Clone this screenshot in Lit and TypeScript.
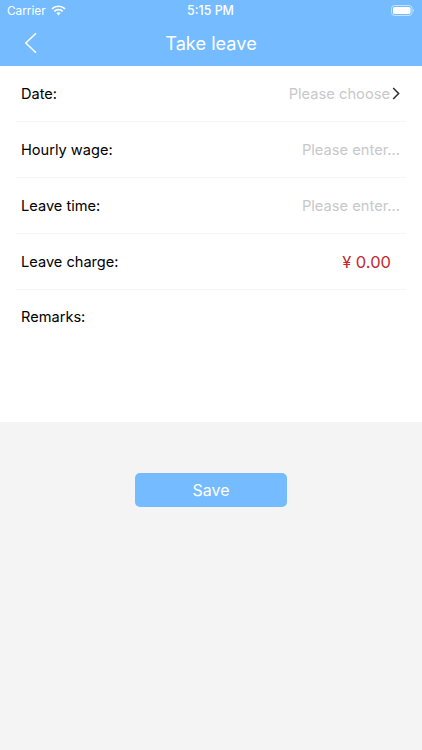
import { LitElement, html, css } from "lit";
import { customElement } from "lit/decorators.js";

@customElement("app-root")
export class AppRoot extends LitElement {
  static styles = css`
    :host {
      display: flex;
      flex-direction: column;
      width: 422px;
      height: 750px;
      background: #f4f4f4;
      font-family: Inter, "Liberation Sans", sans-serif;
      overflow: hidden;
    }
    .header { background: #74bcff; color: #fff; height: 66px; display: flex; flex-direction: column; }
    .status {
      height: 21px;
      display: grid;
      grid-template-columns: 1fr auto 1fr;
      align-items: center;
      padding: 0 8px 0 7px;
      font-size: 11.8px;
    }
    .status .left { display: flex; align-items: center; gap: 5px; }
    .status .left span { padding-top: 1px; }
    .status .left svg { display: block; }
    .status .time { font-weight: 500; font-size: 12.4px; }
    .status .right { justify-self: end; display: flex; }
    .nav { flex: 1; display: grid; grid-template-columns: 1fr auto 1fr; align-items: center; padding: 0 24px 2px; }
    .nav .title { font-size: 18.2px; font-weight: 400; }
    .nav svg { display: block; }
    .form { background: #fff; height: 356px; padding: 0 16px; box-sizing: border-box; display: flex; flex-direction: column; }
    .row {
      height: 56px;
      flex: none;
      box-sizing: border-box;
      border-bottom: 1px solid #f6f6f6;
      display: flex;
      align-items: center;
      justify-content: space-between;
      padding: 0 6px 0 5px;
      font-size: 14.6px;
      color: #000;
    }
    .row.last { border-bottom: none; padding-bottom: 3px; }
    .ph { color: #c8c8ca; display: flex; align-items: center; gap: 2px; font-size: 14.7px; }
    .charge { color: #c6282c; font-size: 16.5px; padding-right: 9px; }
    .actions { display: flex; justify-content: center; padding-top: 51px; }
    .save {
      width: 152px;
      height: 34px;
      border: none;
      border-radius: 5px;
      background: #74bcff;
      color: #fff;
      font: inherit;
      font-size: 16px;
      font-weight: 400;
    }
  `;

  render() {
    return html`
      <div class="header">
        <div class="status">
          <div class="left">
            <span>Carrier</span>
            <svg width="15" height="11" viewBox="0 0 15 11" fill="none" stroke="#fff" stroke-width="1.7">
              <path d="M1 3.9a9.3 9.3 0 0 1 13 0"/>
              <path d="M3.3 6.3a6 6 0 0 1 8.4 0"/>
              <path d="M7.5 7.3c-.8 0-1.6.3-2.1.8l2.1 2.5 2.1-2.5c-.5-.5-1.3-.8-2.1-.8z" fill="#fff" stroke="none"/>
            </svg>
          </div>
          <div class="time">5:15 PM</div>
          <div class="right">
            <svg width="23" height="11" viewBox="0 0 23 11">
              <rect x="0.5" y="0.5" width="20.5" height="10" rx="3" fill="none" stroke="#fff" stroke-opacity="0.55"/>
              <rect x="2" y="2" width="17.5" height="7" rx="1.6" fill="#fff"/>
              <path d="M22 3.8v3.4c.6-.2 1-.9 1-1.7s-.4-1.5-1-1.7z" fill="#fff" fill-opacity="0.5"/>
            </svg>
          </div>
        </div>
        <div class="nav">
          <svg width="14" height="22" viewBox="0 0 14 22" fill="none" stroke="#fff" stroke-width="1.5">
            <path d="M12 1.2 1.8 11 12 20.8"/>
          </svg>
          <div class="title">Take leave</div>
          <div></div>
        </div>
      </div>
      <div class="form">
        <div class="row">
          <span>Date:</span>
          <span class="ph">Please choose
            <svg width="8" height="13" viewBox="0 0 8 13" fill="none" stroke="#333" stroke-width="1.6">
              <path d="M1.2 1 6.6 6.5 1.2 12"/>
            </svg>
          </span>
        </div>
        <div class="row"><span>Hourly wage:</span><span class="ph">Please enter...</span></div>
        <div class="row"><span>Leave time:</span><span class="ph">Please enter...</span></div>
        <div class="row"><span>Leave charge:</span><span class="charge">¥ 0.00</span></div>
        <div class="row last"><span>Remarks:</span></div>
      </div>
      <div class="actions"><button class="save">Save</button></div>
    `;
  }
}
